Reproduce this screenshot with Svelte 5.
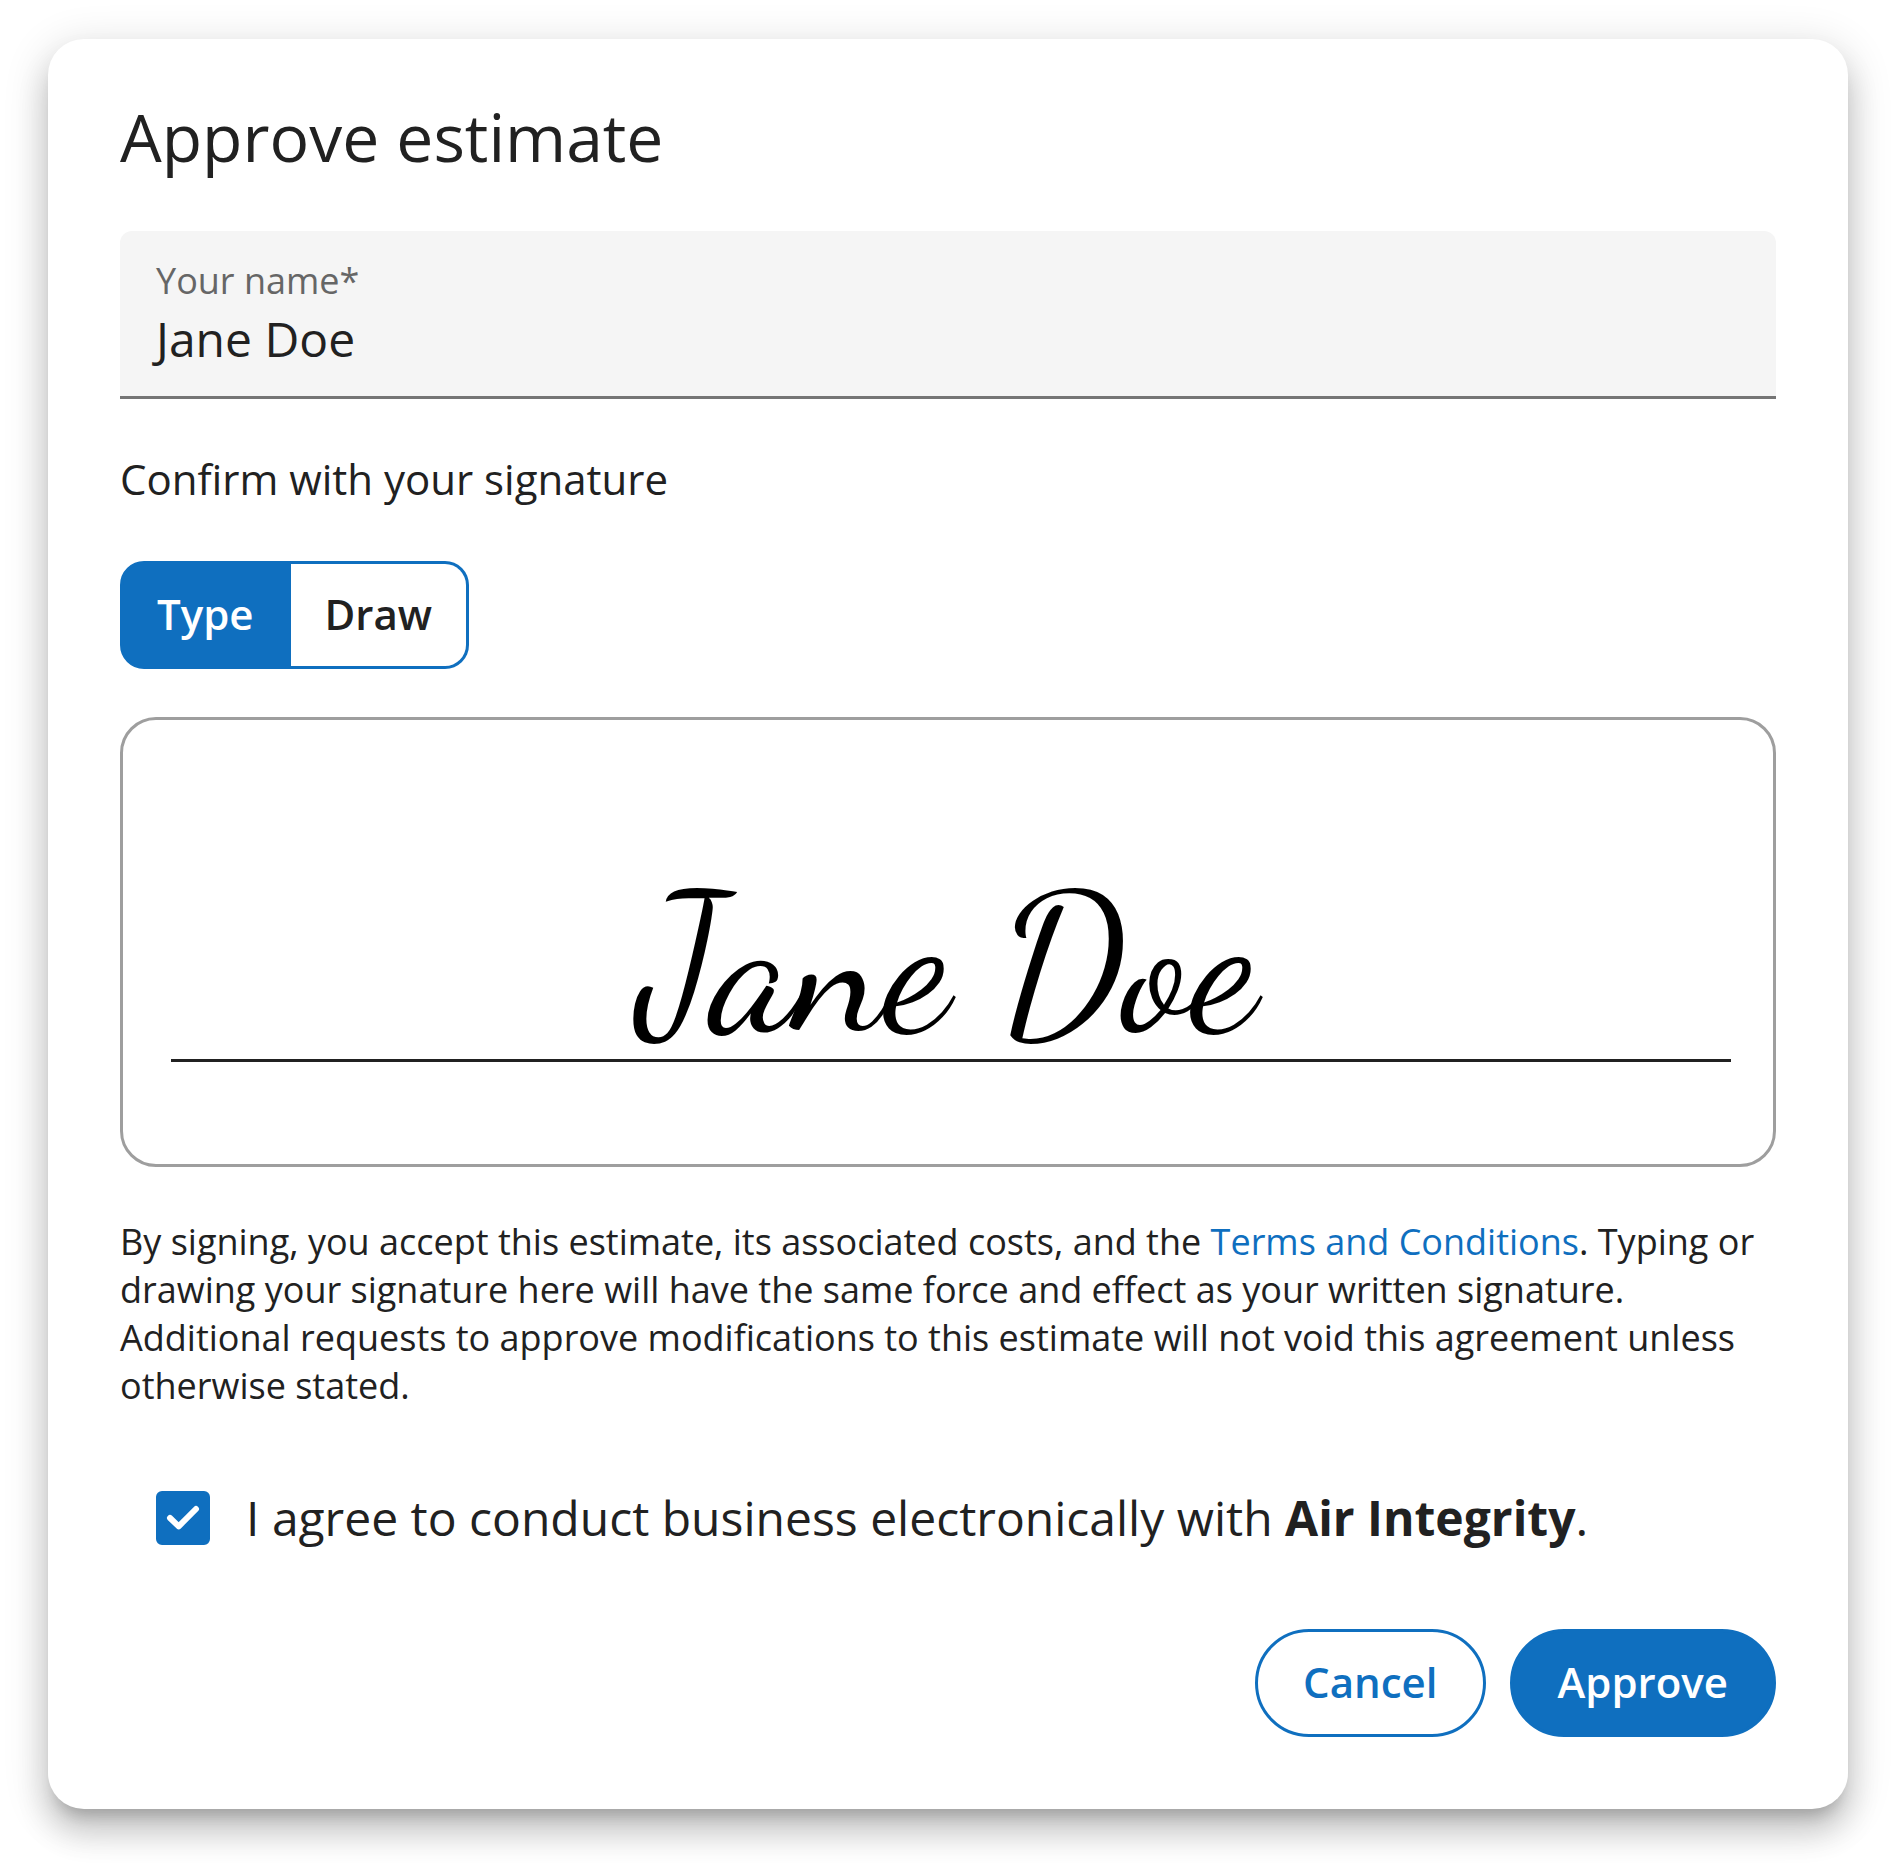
<script>
  let name = $state('Jane Doe');
  let mode = $state('type');
  let agreed = $state(true);
</script>

<main class="page">
  <form class="card" onsubmit={(e) => e.preventDefault()}>
    <h1>Approve estimate</h1>

    <div class="field">
      <label for="signer">Your name*</label>
      <input id="signer" type="text" autocomplete="off" spellcheck="false" bind:value={name} />
    </div>

    <p class="prompt">Confirm with your signature</p>

    <div class="toggle" role="group" aria-label="Signature method">
      <button
        type="button"
        class:active={mode === 'type'}
        aria-pressed={mode === 'type'}
        onclick={() => (mode = 'type')}>Type</button>
      <button
        type="button"
        class:active={mode === 'draw'}
        aria-pressed={mode === 'draw'}
        onclick={() => (mode = 'draw')}>Draw</button>
    </div>

    <div class="pad">
      <div class="signature">{name}</div>
    </div>

    <p class="legal">
      By signing, you accept this estimate, its associated costs, and the
      <a href="#terms">Terms and Conditions</a>. Typing or drawing your signature here will have the
      same force and effect as your written signature. Additional requests to approve modifications
      to this estimate will not void this agreement unless otherwise stated.
    </p>

    <label class="consent">
      <span class="check">
        <input type="checkbox" bind:checked={agreed} />
        {#if agreed}
          <svg viewBox="0 0 54 54" aria-hidden="true">
            <path d="M14 27 L22.700 35.300 L40 18" />
          </svg>
        {/if}
      </span>
      <span>I agree to conduct business electronically with <strong>Air Integrity</strong>.</span>
    </label>

    <div class="actions">
      <button type="button" class="outlined">Cancel</button>
      <button type="submit" class="filled">Approve</button>
    </div>
  </form>
</main>

<style>
  :global(body) {
    background: #fff;
  }

  .page {
    --blue: #0f6fbf;
    --ink: #212121;
    box-sizing: border-box;
    padding: 39px 48px 60px;
    font-family: 'Open Sans', 'Noto Sans', sans-serif;
    color: var(--ink);
  }

  .card {
    display: flex;
    flex-direction: column;
    gap: 48px;
    padding: 50px 72px 72px;
    border-radius: 36px;
    background: #fff;
    box-shadow:
      0 15px 15px -9px rgba(0, 0, 0, 0.2),
      0 24px 30px 3px rgba(0, 0, 0, 0.14),
      0 9px 42px 6px rgba(0, 0, 0, 0.12);
  }

  h1,
  p {
    margin: 0;
    font-weight: 400;
  }

  h1 {
    font-size: 66px;
    line-height: 94px;
  }

  .field {
    display: flex;
    flex-direction: column;
    padding: 26px 30px 25px;
    border-bottom: 3px solid #757575;
    border-radius: 12px 12px 0 0;
    background: #f5f5f5;
  }

  .field label {
    padding: 0 6px;
    font-size: 36px;
    line-height: 48px;
    color: #666;
  }

  .field input {
    box-sizing: border-box;
    width: 100%;
    height: 66px;
    padding: 0;
    border: 0;
    outline: 0;
    background: none;
    font: inherit;
    font-size: 48px;
    text-indent: 6px;
    color: inherit;
  }

  .prompt {
    padding-bottom: 2px;
    font-size: 42px;
    line-height: 64px;
  }

  button {
    box-sizing: border-box;
    height: 108px;
    border: 3px solid var(--blue);
    font: inherit;
    font-size: 42px;
    font-weight: 600;
    cursor: pointer;
  }

  .toggle {
    display: flex;
  }

  .toggle button {
    padding: 0 34px 3px;
    background: #fff;
    color: var(--ink);
  }

  .toggle button:first-child {
    border-radius: 24px 0 0 24px;
  }

  .toggle button:last-child {
    border-left: 0;
    border-radius: 0 24px 24px 0;
  }

  .toggle .active {
    background: var(--blue);
    color: #fff;
  }

  .pad {
    box-sizing: border-box;
    min-height: 450px;
    padding: 120px 42px 102px 48px;
    border: 3px solid #9e9e9e;
    border-radius: 36px;
  }

  .signature {
    box-sizing: border-box;
    height: 222px;
    padding-right: 6px;
    border-bottom: 3px solid var(--ink);
    font-family: 'Dancing Script', cursive;
    font-size: 192px;
    line-height: 252px;
    text-align: center;
    color: #000;
  }

  .legal {
    padding-top: 3px;
    font-size: 36px;
    line-height: 48px;
  }

  .legal a {
    color: var(--blue);
    text-decoration: none;
  }

  .consent {
    display: flex;
    align-items: center;
    gap: 36px;
    min-height: 120px;
    padding-left: 36px;
    font-size: 48px;
    line-height: 72px;
  }

  .check {
    display: grid;
    flex: none;
    width: 54px;
    height: 54px;
  }

  .check input,
  .check svg {
    grid-area: 1 / 1;
    width: 54px;
    height: 54px;
    margin: 0;
  }

  .check input {
    box-sizing: border-box;
    appearance: none;
    border: 6px solid #757575;
    border-radius: 6px;
  }

  .check input:checked {
    border-color: var(--blue);
    background: var(--blue);
  }

  .check svg {
    pointer-events: none;
    fill: none;
    stroke: #fff;
    stroke-width: 6;
    stroke-linecap: round;
    stroke-linejoin: round;
  }

  strong {
    font-weight: 700;
  }

  .actions {
    display: flex;
    justify-content: flex-end;
    gap: 24px;
    padding-top: 3px;
  }

  .actions button {
    padding: 0 45px 3px;
    border-radius: 54px;
  }

  .outlined {
    background: #fff;
    color: var(--blue);
  }

  .filled {
    background: var(--blue);
    color: #fff;
  }
</style>
